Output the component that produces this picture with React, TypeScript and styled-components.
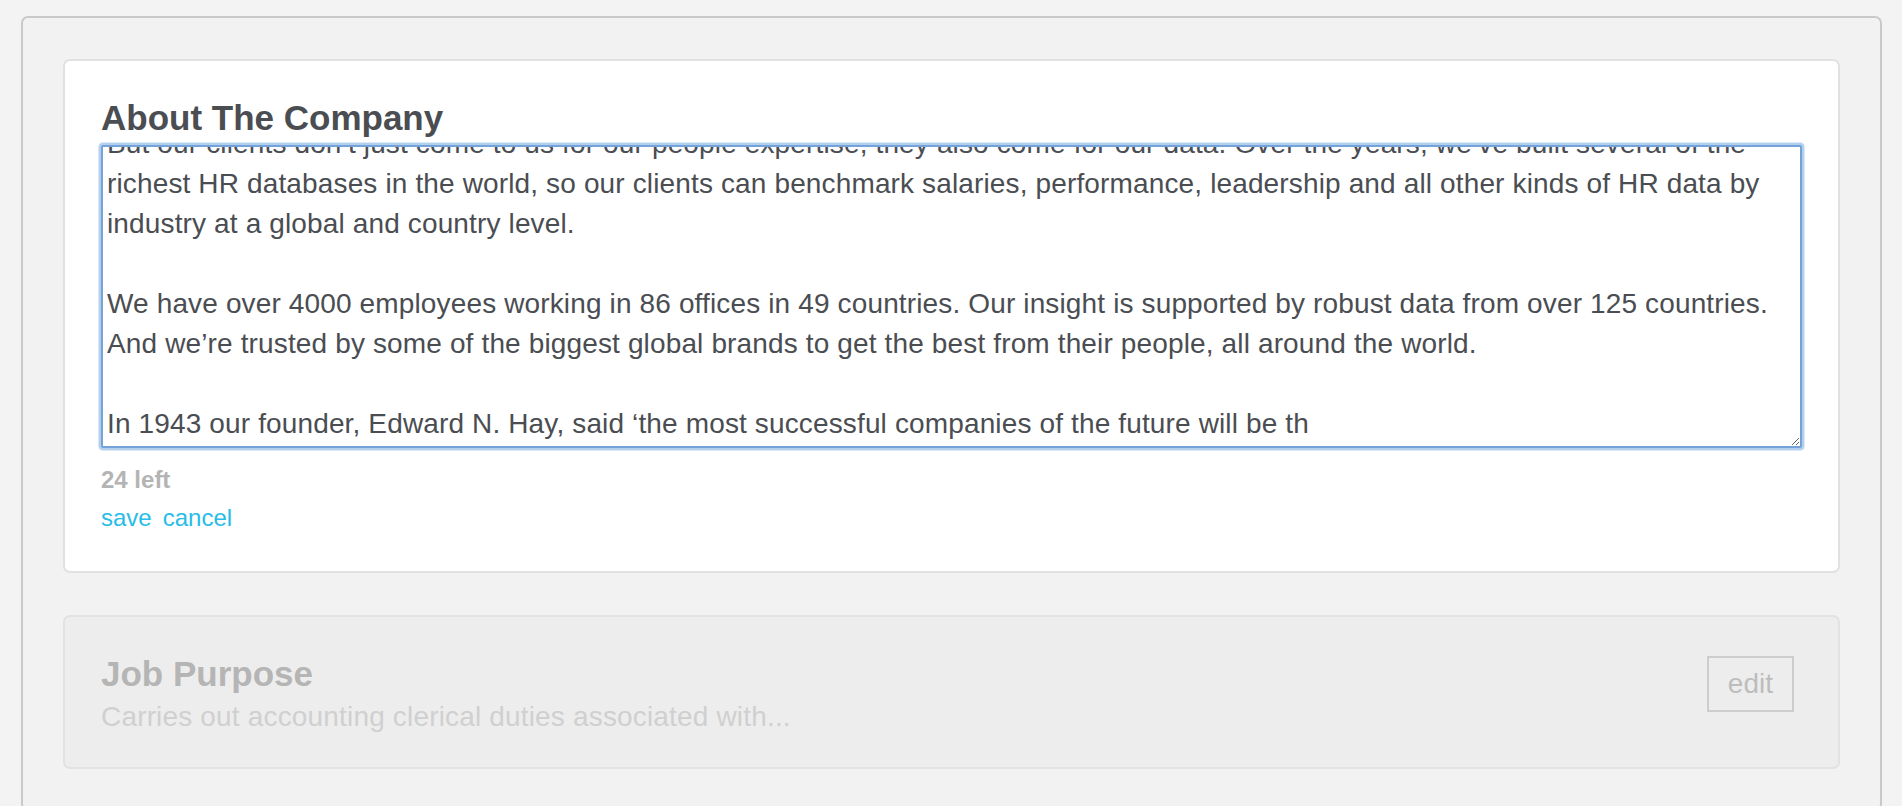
import React, { useLayoutEffect, useRef } from "react";
import styled, { createGlobalStyle, css } from "styled-components";

const GlobalStyle = createGlobalStyle`
  html, body {
    margin: 0;
    padding: 0;
    background: #f3f3f3;
    overflow: hidden;
  }
  body {
    font-family: "Liberation Sans", Arial, Helvetica, sans-serif;
    color: #4a4d52;
  }
  * { box-sizing: border-box; }
`;

const Panel = styled.div`
  margin: 16px 20px 0 21px;
  padding: 41px 40px 40px;
  background: #f2f2f2;
  border: 2px solid #c9c9c9;
  border-radius: 7px;
  display: flex;
  flex-direction: column;
  gap: 42px;
`;

const Card = styled.section<{ $muted?: boolean }>`
  border-radius: 7px;
  ${(p) =>
    p.$muted
      ? css`
          padding: 36px 36px 34px;
          background: #ededed;
          border: 2px solid #e2e2e2;
        `
      : css`
          padding: 36px;
          background: #ffffff;
          border: 2px solid #e1e1e1;
        `}
`;

const Title = styled.h2<{ $muted?: boolean }>`
  margin: 1px 0 7px;
  font-size: 35px;
  line-height: 40px;
  font-weight: 700;
  letter-spacing: 0;
  color: ${(p) => (p.$muted ? "#b5b5b5" : "#4a4d51")};
`;

const Editor = styled.textarea`
  display: block;
  width: 100%;
  height: 303px;
  margin: 0;
  padding: 4px 4px 2px;
  font-family: "Liberation Sans", Arial, Helvetica, sans-serif;
  font-size: 28px;
  line-height: 40px;
  letter-spacing: 0.14px;
  color: #4a4d52;
  background: #fff;
  border: 2px solid #74a3da;
  border-radius: 2px;
  box-shadow: 0 0 0 2px #b3cfee, 0 0 0 3px #dce9f7;
  white-space: pre;
  overflow: hidden;
  resize: vertical;
  outline: none;
`;

const Counter = styled.div`
  margin-top: 15px;
  font-size: 24px;
  line-height: 34px;
  font-weight: 700;
  color: #b4b4b4;
`;

const Actions = styled.div`
  margin-top: 4px;
  display: flex;
  gap: 11px;
  font-size: 24px;
  line-height: 34px;
`;

const ActionLink = styled.a`
  color: #27bde8;
  text-decoration: none;
  cursor: pointer;
`;

const Row = styled.div`
  display: flex;
  align-items: flex-start;
  justify-content: space-between;
`;

const Info = styled.div`
  display: flex;
  flex-direction: column;
`;

const Summary = styled.div`
  font-size: 28px;
  line-height: 32px;
  letter-spacing: 0.17px;
  color: #d0d0d0;
`;

const EditButton = styled.button`
  margin: 3px 8px 0 0;
  padding: 6px 19px;
  font-family: "Liberation Sans", Arial, Helvetica, sans-serif;
  font-size: 28px;
  line-height: 40px;
  color: #bdbdbd;
  background: transparent;
  border: 2px solid #cdcdcd;
  border-radius: 0;
  cursor: pointer;
`;

const ABOUT_TEXT = [
  "But our clients don’t just come to us for our people expertise, they also come for our data. Over the years, we’ve built several of the",
  "richest HR databases in the world, so our clients can benchmark salaries, performance, leadership and all other kinds of HR data by",
  "industry at a global and country level.",
  "",
  "We have over 4000 employees working in 86 offices in 49 countries. Our insight is supported by robust data from over 125 countries.",
  "And we’re trusted by some of the biggest global brands to get the best from their people, all around the world.",
  "",
  "In 1943 our founder, Edward N. Hay, said ‘the most successful companies of the future will be th",
].join("\n");

export default function App() {
  const ref = useRef<HTMLTextAreaElement>(null);

  useLayoutEffect(() => {
    const el = ref.current;
    if (el) el.scrollTop = el.scrollHeight;
  }, []);

  return (
    <>
      <GlobalStyle />
      <Panel>
        <Card>
          <Title>About The Company</Title>
          <Editor ref={ref} defaultValue={ABOUT_TEXT} wrap="off" spellCheck={false} />
          <Counter>24 left</Counter>
          <Actions>
            <ActionLink>save</ActionLink>
            <ActionLink>cancel</ActionLink>
          </Actions>
        </Card>
        <Card $muted>
          <Row>
            <Info>
              <Title $muted>Job Purpose</Title>
              <Summary>Carries out accounting clerical duties associated with...</Summary>
            </Info>
            <EditButton>edit</EditButton>
          </Row>
        </Card>
      </Panel>
    </>
  );
}
